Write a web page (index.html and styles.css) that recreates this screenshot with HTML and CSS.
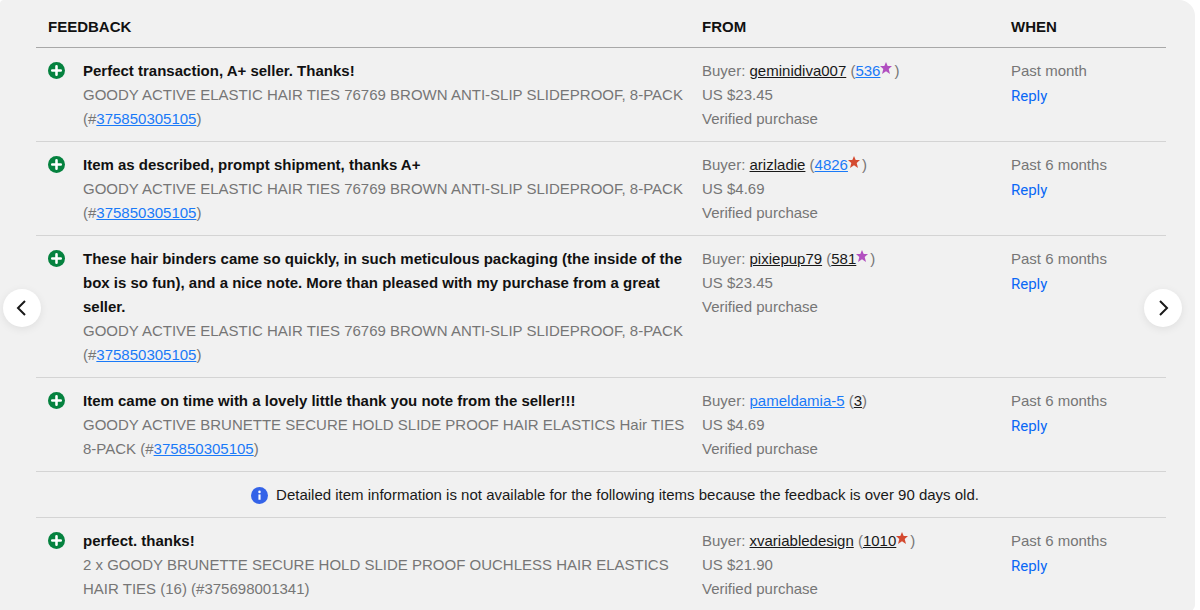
FILE: index.html
```html
<!DOCTYPE html>
<html lang="en">
<head>
  <meta charset="UTF-8">
  <title>Feedback</title>
  <link rel="stylesheet" href="styles.css">
</head>
<body>

  <!-- Shared icons -->
  <svg class="sprite" aria-hidden="true">
    <symbol id="plus" viewBox="0 0 16 16">
      <circle cx="8" cy="8" r="8" fill="#05823f"/>
      <path d="M8 4v8M4 8h8" stroke="#fff" stroke-width="2.4" stroke-linecap="round"/>
    </symbol>
    <symbol id="star" viewBox="0 0 12 12">
      <path d="M6 0l1.7 4.1H12L8.7 7l1.3 5L6 9.2 2 12l1.3-5L0 4.1h4.3z" fill="currentColor"/>
    </symbol>
  </svg>

  <main class="panel">
    <table class="feedback">
      <colgroup>
        <col class="col-rating">
        <col>
        <col class="col-from">
        <col class="col-when">
      </colgroup>
      <thead>
        <tr>
          <th colspan="2">FEEDBACK</th>
          <th>FROM</th>
          <th>WHEN</th>
        </tr>
      </thead>
      <tbody>
        <tr>
          <td class="rating"><svg class="plus" role="img" aria-label="Positive"><use href="#plus"/></svg></td>
          <td class="comment">
            <strong>Perfect transaction, A+ seller. Thanks!</strong>
            <div>GOODY ACTIVE ELASTIC HAIR TIES 76769 BROWN ANTI-SLIP SLIDEPROOF, 8-PACK (#<a href="#">375850305105</a>)</div>
          </td>
          <td>
            <div>Buyer: <a class="visited" href="#">geminidiva007</a> (<a href="#">536</a><svg class="star purple"><use href="#star"/></svg>)</div>
            <div>US $23.45</div>
            <div>Verified purchase</div>
          </td>
          <td>
            <div>Past month</div>
            <button class="reply" type="button">Reply</button>
          </td>
        </tr>
        <tr>
          <td class="rating"><svg class="plus" role="img" aria-label="Positive"><use href="#plus"/></svg></td>
          <td class="comment">
            <strong>Item as described, prompt shipment, thanks A+</strong>
            <div>GOODY ACTIVE ELASTIC HAIR TIES 76769 BROWN ANTI-SLIP SLIDEPROOF, 8-PACK (#<a href="#">375850305105</a>)</div>
          </td>
          <td>
            <div>Buyer: <a class="visited" href="#">arizladie</a> (<a href="#">4826</a><svg class="star red"><use href="#star"/></svg>)</div>
            <div>US $4.69</div>
            <div>Verified purchase</div>
          </td>
          <td>
            <div>Past 6 months</div>
            <button class="reply" type="button">Reply</button>
          </td>
        </tr>
        <tr>
          <td class="rating"><svg class="plus" role="img" aria-label="Positive"><use href="#plus"/></svg></td>
          <td class="comment">
            <strong>These hair binders came so quickly, in such meticulous packaging (the inside of the box is so fun), and a nice note. More than pleased with my purchase from a great seller.</strong>
            <div>GOODY ACTIVE ELASTIC HAIR TIES 76769 BROWN ANTI-SLIP SLIDEPROOF, 8-PACK (#<a href="#">375850305105</a>)</div>
          </td>
          <td>
            <div>Buyer: <a class="visited" href="#">pixiepup79</a> (<a class="visited" href="#">581</a><svg class="star purple"><use href="#star"/></svg>)</div>
            <div>US $23.45</div>
            <div>Verified purchase</div>
          </td>
          <td>
            <div>Past 6 months</div>
            <button class="reply" type="button">Reply</button>
          </td>
        </tr>
        <tr>
          <td class="rating"><svg class="plus" role="img" aria-label="Positive"><use href="#plus"/></svg></td>
          <td class="comment">
            <strong>Item came on time with a lovely little thank you note from the seller!!!</strong>
            <div>GOODY ACTIVE BRUNETTE SECURE HOLD SLIDE PROOF HAIR ELASTICS Hair TIES 8-PACK (#<a href="#">375850305105</a>)</div>
          </td>
          <td>
            <div>Buyer: <a href="#">pameldamia-5</a> (<a class="visited" href="#">3</a>)</div>
            <div>US $4.69</div>
            <div>Verified purchase</div>
          </td>
          <td>
            <div>Past 6 months</div>
            <button class="reply" type="button">Reply</button>
          </td>
        </tr>
        <tr>
          <td class="notice" colspan="4">
            <div class="notice-text">
              <svg class="info" viewBox="0 0 16 16" aria-hidden="true">
                <circle cx="8" cy="8" r="8" fill="#3463e8"/>
                <circle cx="8" cy="4.6" r="1.2" fill="#fff"/>
                <path d="M8 7v5" stroke="#fff" stroke-width="2"/>
              </svg>
              <span>Detailed item information is not available for the following items because the feedback is over 90 days old.</span>
            </div>
          </td>
        </tr>
        <tr>
          <td class="rating"><svg class="plus" role="img" aria-label="Positive"><use href="#plus"/></svg></td>
          <td class="comment">
            <strong>perfect. thanks!</strong>
            <div>2 x GOODY BRUNETTE SECURE HOLD SLIDE PROOF OUCHLESS HAIR ELASTICS HAIR TIES (16) (#375698001341)</div>
          </td>
          <td>
            <div>Buyer: <a class="visited" href="#">xvariabledesign</a> (<a class="visited" href="#">1010</a><svg class="star red"><use href="#star"/></svg>)</div>
            <div>US $21.90</div>
            <div>Verified purchase</div>
          </td>
          <td>
            <div>Past 6 months</div>
            <button class="reply" type="button">Reply</button>
          </td>
        </tr>
      </tbody>
    </table>
  </main>

  <!-- Carousel arrows -->
  <button class="arrow prev" type="button" aria-label="Previous">
    <svg viewBox="0 0 16 16"><path d="M11 1L4 8l7 7"/></svg>
  </button>
  <button class="arrow next" type="button" aria-label="Next">
    <svg viewBox="0 0 16 16"><path d="M5 1l7 7-7 7"/></svg>
  </button>

</body>
</html>
```
FILE: styles.css
```css
* {
  box-sizing: border-box;
}

body {
  margin: 0;
  background-color: #fff;
  color: #767676;
  font-family: "Liberation Sans", Arial, sans-serif;
  font-size: 15px;
  line-height: 24px;
}

.sprite {
  display: none;
}

.panel {
  min-height: 100vh;
  margin-right: 5px;
  padding: 5px 29px 0 36px;
  background-color: #f1f1f1;
  border-radius: 4px 16px 6px 0;
}

.feedback {
  width: 100%;
  border-collapse: collapse;
  table-layout: fixed;
}

.col-rating {
  width: 47px;
}

.col-from {
  width: 309px;
}

.col-when {
  width: 155px;
}

th {
  padding: 10px 0 8px;
  border-bottom: 1px solid #a8a8a8;
  color: #111;
  text-align: left;
}

.feedback th:first-child {
  padding-left: 12px;
}

td {
  padding: 11px 0 10px;
  border-bottom: 1px solid #d4d4d4;
  vertical-align: top;
}

tr:last-child td {
  border-bottom: none;
}

.feedback .rating {
  padding-left: 12px;
}

.feedback .comment {
  padding-right: 12px;
}

strong {
  display: block;
  color: #111;
}

a {
  color: #1a7af8;
}

a.visited {
  color: #191919;
}

.plus {
  display: block;
  width: 17px;
  height: 17px;
  margin-top: 3px;
}

.star {
  width: 12px;
  height: 12px;
  margin-right: 2px;
  vertical-align: 2px;
}

.purple {
  color: #b14fc0;
}

.red {
  color: #d44a30;
}

.reply {
  display: block;
  padding: 0;
  border: none;
  background: none;
  color: #0968f6;
  font-family: Roboto, sans-serif;
  font-size: 15px;
  line-height: 26px;
  cursor: pointer;
}

.feedback .notice {
  padding-left: 28px;
}

.notice-text {
  display: flex;
  align-items: center;
  justify-content: center;
  gap: 8px;
  color: #191919;
}

.info {
  width: 17px;
  height: 17px;
}

.arrow {
  position: absolute;
  top: 289px;
  display: flex;
  align-items: center;
  justify-content: center;
  width: 38px;
  height: 38px;
  padding: 0;
  border: none;
  border-radius: 50%;
  background-color: #fff;
  box-shadow: 0 2px 8px rgba(0, 0, 0, 0.08);
  cursor: pointer;
}

.arrow svg {
  width: 16px;
  height: 16px;
  fill: none;
  stroke: #191919;
  stroke-width: 2;
}

.prev {
  left: 3px;
}

.next {
  right: 18px;
}
```
